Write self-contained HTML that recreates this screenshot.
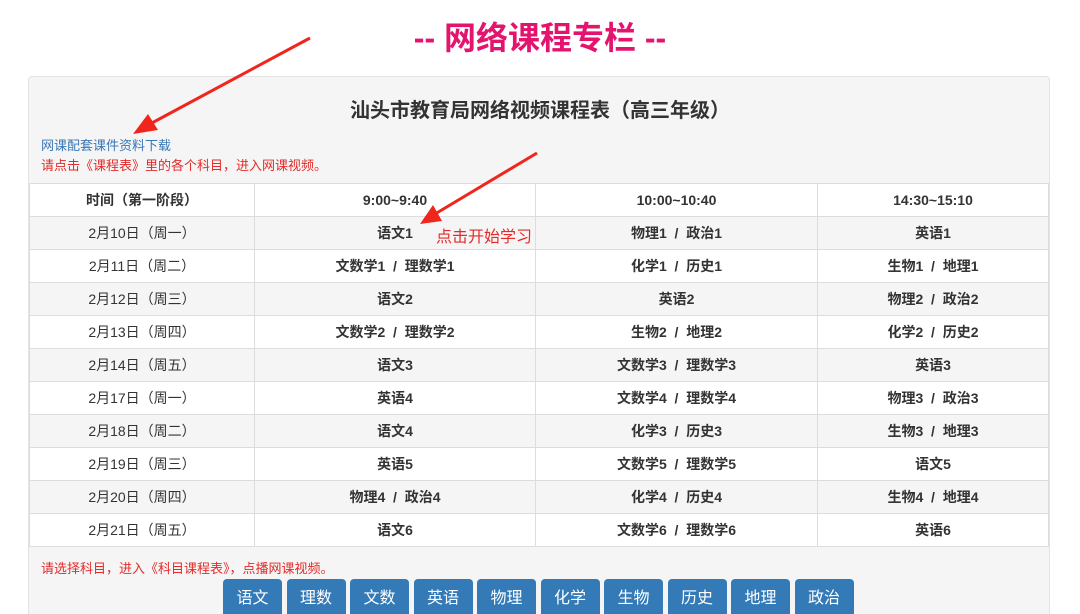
<!DOCTYPE html>
<html><head><meta charset="utf-8"><style>
html,body{margin:0;width:1080px;height:614px;overflow:hidden}
body{background:#fff;font-family:"Liberation Sans","Noto Sans CJK SC",sans-serif;position:relative}
.t{position:absolute;top:15px;left:0;width:1080px;text-align:center;color:#e3136e;font-size:32px;font-weight:bold;line-height:46px}
.p{position:absolute;left:28px;top:76px;width:1020px;height:560px;background:#f5f5f5;border:1px solid #e3e3e3;border-radius:4px}
.h{position:absolute;top:94px;left:0;width:1080px;text-align:center;font-size:20px;font-weight:bold;color:#333}
.l1{position:absolute;left:41px;top:135px;font-size:13px;color:#3a78b5}
.l2{position:absolute;left:41px;top:155px;font-size:13px;color:#e42a2a}
.l3{position:absolute;left:41px;top:558px;font-size:13px;color:#e42a2a}
table{position:absolute;left:29px;top:183px;border-collapse:collapse;width:1020px}
td{height:32px;border:1px solid #ddd;text-align:center;font-size:14px;color:#333;font-weight:bold;padding:0}
td:first-child{font-weight:normal;width:224px}
tr:nth-child(even) td{background:#f5f5f5}
tr:nth-child(odd) td{background:#fff}
tr:first-child td{font-weight:bold}
.b{position:absolute;top:579px;display:flex;gap:4.5px;left:223px}
.b span{width:59px;height:40px;background:#337ab7;color:#fff;border-radius:4px 4px 0 0;text-align:center;line-height:40px;font-size:16px}
.a{position:absolute;color:#e42a2a;font-size:16px;left:436px;top:223px}
</style></head><body>
<div class="t">-- 网络课程专栏 --</div>
<div class="p"></div>
<div class="h">汕头市教育局网络视频课程表（高三年级）</div>
<div class="l1">网课配套课件资料下载</div>
<div class="l2">请点击《课程表》里的各个科目，进入网课视频。</div>
<table>
<tr><td>时间（第一阶段）</td><td style="width:280px">9:00~9:40</td><td style="width:281px">10:00~10:40</td><td>14:30~15:10</td></tr>
<tr><td>2月10日（周一）</td><td>语文1</td><td>物理1 &nbsp;/&nbsp; 政治1</td><td>英语1</td></tr>
<tr><td>2月11日（周二）</td><td>文数学1 &nbsp;/&nbsp; 理数学1</td><td>化学1 &nbsp;/&nbsp; 历史1</td><td>生物1 &nbsp;/&nbsp; 地理1</td></tr>
<tr><td>2月12日（周三）</td><td>语文2</td><td>英语2</td><td>物理2 &nbsp;/&nbsp; 政治2</td></tr>
<tr><td>2月13日（周四）</td><td>文数学2 &nbsp;/&nbsp; 理数学2</td><td>生物2 &nbsp;/&nbsp; 地理2</td><td>化学2 &nbsp;/&nbsp; 历史2</td></tr>
<tr><td>2月14日（周五）</td><td>语文3</td><td>文数学3 &nbsp;/&nbsp; 理数学3</td><td>英语3</td></tr>
<tr><td>2月17日（周一）</td><td>英语4</td><td>文数学4 &nbsp;/&nbsp; 理数学4</td><td>物理3 &nbsp;/&nbsp; 政治3</td></tr>
<tr><td>2月18日（周二）</td><td>语文4</td><td>化学3 &nbsp;/&nbsp; 历史3</td><td>生物3 &nbsp;/&nbsp; 地理3</td></tr>
<tr><td>2月19日（周三）</td><td>英语5</td><td>文数学5 &nbsp;/&nbsp; 理数学5</td><td>语文5</td></tr>
<tr><td>2月20日（周四）</td><td>物理4 &nbsp;/&nbsp; 政治4</td><td>化学4 &nbsp;/&nbsp; 历史4</td><td>生物4 &nbsp;/&nbsp; 地理4</td></tr>
<tr><td>2月21日（周五）</td><td>语文6</td><td>文数学6 &nbsp;/&nbsp; 理数学6</td><td>英语6</td></tr>
</table>
<div class="a">点击开始学习</div>
<div class="l3">请选择科目，进入《科目课程表》，点播网课视频。</div>
<div class="b"><span>语文</span><span>理数</span><span>文数</span><span>英语</span><span>物理</span><span>化学</span><span>生物</span><span>历史</span><span>地理</span><span>政治</span></div>
<svg style="position:absolute;left:0;top:0" width="1080" height="614">
<line x1="310" y1="38" x2="150" y2="124" stroke="#f0261c" stroke-width="3"/>
<polygon points="133,134 148,114 158,130" fill="#f0261c"/>
<line x1="537" y1="153" x2="435" y2="214" stroke="#f0261c" stroke-width="3"/>
<polygon points="420,224 433,205 442,221" fill="#f0261c"/>
</svg>
</body></html>
